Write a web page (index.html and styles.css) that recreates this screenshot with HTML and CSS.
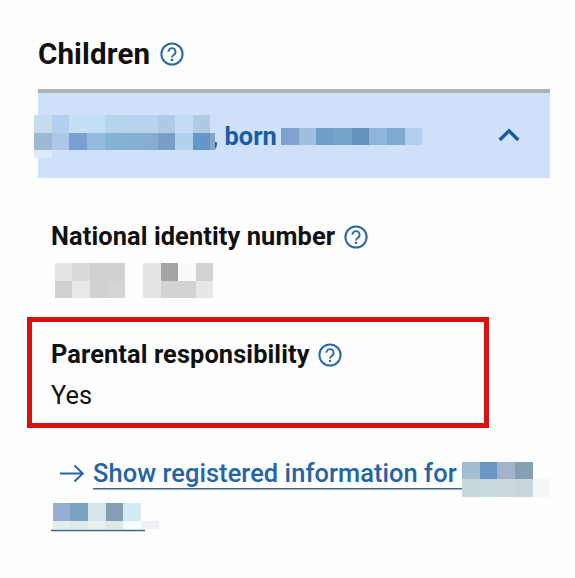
FILE: index.html
```html
<!DOCTYPE html>
<html lang="en">
<head>
<meta charset="utf-8">
<title>Children</title>
<link rel="stylesheet" href="styles.css">
</head>
<body>
<svg width="0" height="0" class="defs" aria-hidden="true">
  <symbol id="help" viewBox="0 0 24 24">
    <circle cx="12" cy="12" r="10.6" fill="none" stroke="currentColor" stroke-width="2"/>
    <path d="M8.4 9.8a3.6 3.5 0 1 1 5.8 2.6C12.8 13.4 12 13.8 12 15.4" fill="none" stroke="currentColor" stroke-width="1.9"/>
    <rect x="10.9" y="16.8" width="2.2" height="2.2" fill="currentColor"/>
  </symbol>
</svg>
<main class="page">
  <h1 class="heading"><span class="heading-text">Children</span><svg class="help"><use href="#help"/></svg></h1>
  <section class="accordion">
    <div class="summary">
      <svg class="redact name" width="181" height="43" shape-rendering="crispEdges">
        <path fill="#c8dcf0" d="M0 0h18v18H0z"/><path fill="#b3d1ee" d="M18 0h17v18H18z"/><path fill="#c3e0f6" d="M35 0h18v18H35z"/><path fill="#c1dff5" d="M53 0h18v18H53z"/><path fill="#b5d5ec" d="M71 0h18v18H71z"/><path fill="#b7d3ee" d="M89 0h35v18H89z"/><path fill="#aecae6" d="M124 0h17v18H124z"/><path fill="#c4dcf3" d="M141 0h18v18H141z"/><path fill="#b1cae3" d="M159 0h17v18H159z"/>
        <path fill="#9db9d3" d="M0 18h18v17H0z"/><path fill="#adc8e7" d="M18 18h17v17H18z"/><path fill="#7b9fd1" d="M35 18h18v17H35z"/><path fill="#94bbe0" d="M53 18h18v17H53z"/><path fill="#83b2d3" d="M71 18h18v17H71z"/><path fill="#84b0d3" d="M89 18h17v17H89z"/><path fill="#87add2" d="M106 18h18v17H106z"/><path fill="#779fc8" d="M124 18h17v17H124z"/><path fill="#b3d1ec" d="M141 18h18v17H141z"/><path fill="#6397c9" d="M159 18h17v17H159z"/><path fill="#8ca2c5" d="M176 18h5v17H176z"/>
        <path fill="#dceafb" d="M0 35h18v8H0z"/>
      </svg>
      <span class="born">, born</span>
      <svg class="redact date" width="141" height="17" shape-rendering="crispEdges">
        <path fill="#7fa3d0" d="M0 0h18v17H0z"/><path fill="#a0c0e3" d="M18 0h17v17H18z"/><path fill="#709fc9" d="M35 0h18v17H35z"/><path fill="#72a3ca" d="M53 0h18v17H53z"/><path fill="#6491bc" d="M71 0h17v17H71z"/><path fill="#8fb5d9" d="M88 0h18v17H88z"/><path fill="#7eaad1" d="M106 0h18v17H106z"/><path fill="#b2cfed" d="M124 0h17v17H124z"/>
      </svg>
      <svg class="chevron" width="22" height="14" viewBox="0 0 22 14"><path d="M1.7 12 11 2.8 20.3 12" fill="none" stroke="currentColor" stroke-width="3.4"/></svg>
    </div>
    <div class="field">
      <h2 class="label"><span class="identity-text">National identity number</span><svg class="help"><use href="#help"/></svg></h2>
      <svg class="redact number" width="158" height="35" shape-rendering="crispEdges">
        <path fill="#e4e4e4" d="M0 0h17v18H0z"/><path fill="#dadada" d="M17 0h18v18H17z"/><path fill="#d0d0d0" d="M35 0h35v18H35z"/><path fill="#d0d0d0" d="M0 18h17v17H0z"/><path fill="#e8e8e8" d="M17 18h18v17H17z"/><path fill="#d1d1d1" d="M35 18h18v17H35z"/><path fill="#d5d5d5" d="M53 18h17v17H53z"/>
        <path fill="#e4e4e4" d="M88 0h18v35H88z"/><path fill="#a4a4a4" d="M106 0h17v18H106z"/><path fill="#fafafa" d="M123 0h18v18H123z"/><path fill="#d2d2d2" d="M141 0h17v18H141z"/><path fill="#d3d3d3" d="M106 18h35v17H106z"/><path fill="#e7e7e7" d="M141 18h17v17H141z"/>
      </svg>
    </div>
    <div class="highlight">
      <h2 class="label"><span class="parental-text">Parental responsibility</span><svg class="help"><use href="#help"/></svg></h2>
      <p class="value">Yes</p>
    </div>
    <div class="more">
      <svg class="arrow" width="25" height="18" viewBox="0 0 25 18"><path d="M0 9.5h23M14.5 1.5l8.3 8-8.3 8" fill="none" stroke="currentColor" stroke-width="1.9"/></svg>
      <a class="link">Show registered information for</a>
      <svg class="redact child" width="88" height="35" shape-rendering="crispEdges">
        <path fill="#a2bdd0" d="M0 0h18v17H0z"/><path fill="#6b96c3" d="M18 0h17v17H18z"/><path fill="#a1b3cd" d="M35 0h18v17H35z"/><path fill="#859fb3" d="M53 0h18v17H53z"/><path fill="#c7d7dc" d="M0 17h18v18H0z"/><path fill="#c7d9dc" d="M18 17h17v18H18z"/><path fill="#cbd9de" d="M35 17h18v18H35z"/><path fill="#c8d7d9" d="M53 17h18v18H53z"/><path fill="#f5f8f9" d="M71 17h17v18H71z"/>
      </svg>
    </div>
    <div class="continuation">
      <svg class="redact rest" width="108" height="28">
        <path fill="#95afd1" d="M2 0h17v18H2z"/><path fill="#7ba2c2" d="M19 0h18v18H19z"/><path fill="#d5e5ea" d="M37 0h18v18H37z"/><path fill="#849fb5" d="M55 0h17v18H55z"/><path fill="#d2eaf0" d="M72 0h18v18H72z"/><path fill="#e2edee" d="M2 18h17v8H2z"/><path fill="#dfeaeb" d="M19 18h18v8H19z"/><path fill="#e7f0ee" d="M37 18h18v8H37z"/><path fill="#dfe9e8" d="M55 18h17v8H55z"/><path fill="#f8fdfd" d="M72 18h18v8H72z"/><path fill="#eef0f6" d="M90 18h18v8H90z"/><path fill="#3d6480" d="M0 26.8h94v1.5H0z"/>
      </svg>
    </div>
  </section>
</main>
</body>
</html>
```

FILE: styles.css
```css
* { box-sizing: border-box; }
body { margin: 0; background: #fefefe; color: #101010; font-family: Roboto, "Liberation Sans", sans-serif; font-size: 25px; }
h1, h2, p { margin: 0; }
svg { display: block; flex: none; overflow: visible; }
.defs { position: absolute; }
.page { width: 575px; height: 578px; padding: 36px 25px 0 38px; overflow: hidden; }
.heading { display: flex; align-items: center; height: 36px; font-size: 29.5px; font-weight: 700; line-height: 37px; letter-spacing: 0.15px; }
.heading-text { width: 122px; white-space: nowrap; }
.help { width: 24px; height: 24px; color: #2868a6; }
.accordion { margin-top: 17px; }
.summary { display: flex; height: 89px; padding-top: 1px; border-top: 4px solid #abb2b8; background: #cfe1f9; color: #1b5da4; }
.redact.name { position: relative; margin: 21px 0 0 -4px; z-index: 1; }
.born { width: 69px; margin: 26px 0 0 -3px; line-height: 32px; font-size: 25.4px; font-weight: 700; white-space: nowrap; }
.redact.date { margin-top: 34px; }
.chevron { margin: 34px 0 0 76px; color: #195b9c; }
.field { padding: 42px 0 0 13px; }
.label { display: flex; align-items: center; height: 34px; font-size: 25.4px; font-weight: 700; line-height: 33px; letter-spacing: 0.1px; white-space: nowrap; }
.identity-text { width: 293px; height: 34px; }
.parental-text { width: 267px; height: 34px; }
.redact.number { margin: 9px 0 0 4px; }
.highlight { width: 462px; height: 111px; margin: 19px 0 0 -11px; padding: 16px 0 0 19px; border: 5px solid #db1010; }
.value { margin-top: 6px; line-height: 35px; font-size: 25.4px; }
.more { display: flex; height: 35px; margin: 28px 0 0 22px; color: #2463a5; }
.arrow { margin-top: 8px; }
.link { width: 369px; height: 33px; margin: 1px 0 0 8px; background: linear-gradient(#3d6480, #3d6480) 0 31.2px / 100% 1.5px no-repeat; font-size: 25.4px; font-weight: 500; line-height: 33px; letter-spacing: 0.08px; white-space: nowrap; }
.redact.child { margin-top: 6px; }
.continuation { margin: 12px 0 0 13px; }
```
